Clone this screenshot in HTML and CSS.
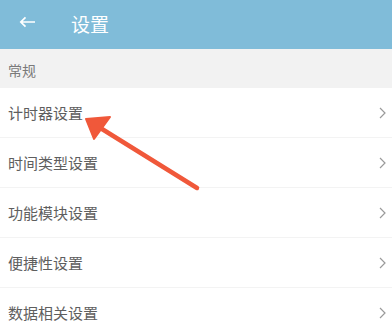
FILE: index.html
```html
<!DOCTYPE html>
<html lang="zh">
<head>
<meta charset="utf-8">
<link rel="stylesheet" href="styles.css">
</head>
<body>
<div class="page">
  <header class="topbar">
    <svg class="back" width="17" height="12" viewBox="0 0 17 12"><path d="M16 6H2M6.5 1.3L1.8 6l4.7 4.7" fill="none" stroke="#fff" stroke-width="1.7"/></svg>
    <span class="title">设置</span>
  </header>
  <div class="section">常规</div>
  <ul class="list">
    <li class="row"><span>计时器设置</span><svg class="chev" width="7" height="12" viewBox="0 0 7 12"><path d="M1 1l5 5-5 5" fill="none" stroke="#9a9a9a" stroke-width="1.2"/></svg></li>
    <li class="row"><span>时间类型设置</span><svg class="chev" width="7" height="12" viewBox="0 0 7 12"><path d="M1 1l5 5-5 5" fill="none" stroke="#9a9a9a" stroke-width="1.2"/></svg></li>
    <li class="row"><span>功能模块设置</span><svg class="chev" width="7" height="12" viewBox="0 0 7 12"><path d="M1 1l5 5-5 5" fill="none" stroke="#9a9a9a" stroke-width="1.2"/></svg></li>
    <li class="row"><span>便捷性设置</span><svg class="chev" width="7" height="12" viewBox="0 0 7 12"><path d="M1 1l5 5-5 5" fill="none" stroke="#9a9a9a" stroke-width="1.2"/></svg></li>
    <li class="row"><span>数据相关设置</span><svg class="chev" width="7" height="12" viewBox="0 0 7 12"><path d="M1 1l5 5-5 5" fill="none" stroke="#9a9a9a" stroke-width="1.2"/></svg></li>
  </ul>
  <svg class="pointer" width="392" height="333" viewBox="0 0 392 333">
    <path d="M197 188L102 129" stroke="#f0583a" stroke-width="4.5" stroke-linecap="round"/>
    <path d="M86 119L110 117L94 139Z" fill="#f0583a" stroke="#f0583a" stroke-width="2" stroke-linejoin="round"/>
  </svg>
</div>
</body>
</html>
```
FILE: styles.css
```css
html, body { margin: 0; padding: 0; }
body {
  width: 392px;
  height: 333px;
  overflow: hidden;
  background: #fff;
  font-family: "Noto Sans CJK SC", "Noto Sans", sans-serif;
}
.page { position: relative; width: 392px; height: 333px; }
.topbar {
  height: 49px;
  background: #80bcd9;
  display: flex;
  align-items: center;
  padding-left: 19px;
  box-sizing: border-box;
}
.back { margin-top: -5px; }
.title {
  color: #fff;
  font-size: 19px;
  margin-left: 35px;
  margin-top: -2px;
  line-height: 1;
}
.section {
  height: 39px;
  background: #f2f2f2;
  color: #7a7a7a;
  font-size: 14px;
  padding-left: 8px;
  display: flex;
  align-items: center;
  padding-top: 3px;
  box-sizing: border-box;
}
.list { list-style: none; margin: 0; padding: 0; }
.row {
  height: 50px;
  display: flex;
  align-items: center;
  justify-content: space-between;
  padding: 0 6px 0 8px;
  color: #5e5e5e;
  font-size: 15px;
  border-bottom: 1px solid #f3f3f3;
  box-sizing: border-box;
}
.pointer { position: absolute; left: 0; top: 0; pointer-events: none; }
```
